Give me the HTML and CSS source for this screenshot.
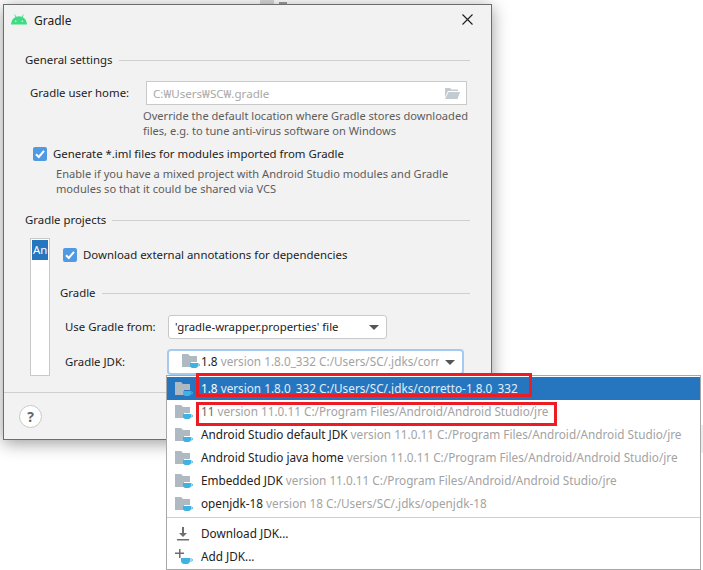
FILE: index.html
```html
<!DOCTYPE html>
<html lang="en">
<head>
<meta charset="utf-8">
<title>Gradle</title>
<link rel="stylesheet" href="styles.css">
</head>
<body>
<svg class="defs" width="0" height="0" aria-hidden="true">
  <symbol id="jdk" viewBox="0 0 18 16">
    <path fill="#afb9c2" d="M0 1h6l2 2h7v6H9v5H0z"/>
    <path fill="#3fb1e3" d="M8 10h8v2.600c0 1.300-1.100 2.400-2.400 2.400h-3.200C9.100 15 8 13.900 8 12.600z"/>
    <path fill="none" stroke="#3fb1e3" d="M15.500 11h1.200a.8.800 0 0 1 0 1.800h-1.200"/>
  </symbol>
  <symbol id="tick" viewBox="0 0 14 14">
    <path fill="none" stroke="#fff" stroke-width="2" d="M3 7.200l2.800 2.800L11 3.800"/>
  </symbol>
</svg>

<div class="bg-mark bg-mark-a"></div>
<div class="bg-mark bg-mark-b"></div>
<div class="bg-mark bg-mark-c"></div>

<main class="dialog">
  <header class="titlebar">
    <svg class="android" viewBox="0 0 16 11" aria-hidden="true">
      <path fill="#3ddc84" d="M0 10.500C.2 6.800 2 4.200 4.500 3L3.200.8l.7-.4L5.300 2.700C6.100 2.400 7 2.200 8 2.200s1.900.2 2.700.5L12.100.4l.7.4L11.500 3C14 4.200 15.800 6.800 16 10.500z"/>
      <circle cx="4.700" cy="7.300" r=".8" fill="#f2f2f2"/>
      <circle cx="11.300" cy="7.300" r=".8" fill="#f2f2f2"/>
    </svg>
    <span class="title">Gradle</span>
    <svg class="close" viewBox="0 0 11 11" aria-hidden="true">
      <path stroke="#1c1c1c" stroke-width="1.100" d="M.5.500l10 10M10.500.500l-10 10"/>
    </svg>
  </header>

  <section class="content">
    <div class="section-head"><span>General settings</span><i></i></div>
    <div class="home-row">
      <label class="field-label">Gradle user home:</label>
      <div class="path-input">
        <span>C:₩Users₩SC₩.gradle</span>
        <svg class="open-folder" viewBox="0 0 15 11" aria-hidden="true">
          <path fill="#c3cbd2" d="M0 0h5l1.500 1.500H13V3H3L0 9.500z"/>
          <path fill="#c3cbd2" d="M3.500 4H15l-2.500 7H0z"/>
        </svg>
      </div>
    </div>
    <p class="help help-home">Override the default location where Gradle stores downloaded<br>files, e.g. to tune anti-virus software on Windows</p>
    <div class="check-row check-iml">
      <span class="checkbox"><svg viewBox="0 0 14 14"><use href="#tick"/></svg></span>
      <span>Generate *.iml files for modules imported from Gradle</span>
    </div>
    <p class="help help-iml">Enable if you have a mixed project with Android Studio modules and Gradle<br>modules so that it could be shared via VCS</p>

    <div class="section-head head-projects"><span>Gradle projects</span><i></i></div>
    <div class="projects">
      <div class="project-list"><div class="project-item">And</div></div>
      <div class="project-detail">
        <div class="check-row check-annot">
          <span class="checkbox"><svg viewBox="0 0 14 14"><use href="#tick"/></svg></span>
          <span>Download external annotations for dependencies</span>
        </div>
        <div class="section-head head-gradle"><span>Gradle</span><i></i></div>
        <div class="form-row row-from">
          <label class="form-label">Use Gradle from:</label>
          <div class="combo combo-from"><span>'gradle-wrapper.properties' file</span><b class="arrow"></b></div>
        </div>
        <div class="form-row row-jdk">
          <label class="form-label">Gradle JDK:</label>
          <div class="combo combo-jdk">
            <svg class="jdk-icon"><use href="#jdk"/></svg>
            <span class="clip">1.8 <em>version 1.8.0_332 C:/Users/SC/.jdks/corr</em></span>
            <b class="arrow"></b>
          </div>
        </div>
      </div>
    </div>
  </section>

  <footer class="footer">
    <span class="help-btn">?</span>
  </footer>
</main>

<ul class="popup">
  <li class="item selected"><svg class="jdk-icon"><use href="#jdk"/></svg><span>1.8 <em>version 1.8.0_332 C:/Users/SC/.jdks/corretto-1.8.0_332</em></span></li>
  <li class="item"><svg class="jdk-icon"><use href="#jdk"/></svg><span class="dim">11 <em>version 11.0.11 C:/Program Files/Android/Android Studio/jre</em></span></li>
  <li class="item"><svg class="jdk-icon"><use href="#jdk"/></svg><span>Android Studio default JDK <em>version 11.0.11 C:/Program Files/Android/Android Studio/jre</em></span></li>
  <li class="item"><svg class="jdk-icon"><use href="#jdk"/></svg><span>Android Studio java home <em>version 11.0.11 C:/Program Files/Android/Android Studio/jre</em></span></li>
  <li class="item"><svg class="jdk-icon"><use href="#jdk"/></svg><span>Embedded JDK <em>version 11.0.11 C:/Program Files/Android/Android Studio/jre</em></span></li>
  <li class="item"><svg class="jdk-icon"><use href="#jdk"/></svg><span>openjdk-18 <em>version 18 C:/Users/SC/.jdks/openjdk-18</em></span></li>
  <li class="sep"></li>
  <li class="item">
    <svg class="jdk-icon" viewBox="0 0 18 16"><path fill="#6e6e6e" d="M7 1h2v6h3L8 11 4 7h3zM2 13h12v1.500H2z"/></svg>
    <span>Download JDK...</span>
  </li>
  <li class="item">
    <svg class="jdk-icon" viewBox="0 0 18 16"><path fill="#6e6e6e" d="M4 0h1.500v3.500H9V5H5.500v4H4V5H0V3.500h4z"/><path fill="#3fb1e3" d="M6 9h9v2.800c0 1.700-1.300 3.200-3 3.200H9c-1.700 0-3-1.500-3-3.200z"/><path fill="none" stroke="#3fb1e3" d="M15 10h1.500a1 1 0 0 1 0 2H15"/></svg>
    <span>Add JDK...</span>
  </li>
</ul>

<div class="mark mark-one"></div>
<div class="mark mark-two"></div>
</body>
</html>
```

FILE: styles.css
```css
* { box-sizing: border-box; }
html, body { margin: 0; padding: 0; }
body {
  position: relative;
  width: 703px;
  height: 570px;
  overflow: hidden;
  background: #fff;
  font-family: "Noto Sans", "Open Sans", sans-serif;
  font-size: 11.400px;
  color: #222;
}
.defs { position: absolute; }
.bg-mark { position: absolute; background: #d8d8d8; }
.bg-mark-a { left: 260px; top: 0; width: 14px; height: 5px; }
.bg-mark-b { left: 279px; top: 2px; width: 8px; height: 3px; background: #9a9fa6; }
.bg-mark-c { left: 699px; top: 425px; width: 4px; height: 28px; background: #ececec; }

.dialog {
  position: absolute;
  left: 3px;
  top: 4px;
  width: 489px;
  height: 436px;
  display: flex;
  flex-direction: column;
  background: #f2f2f2;
  border: 1px solid #6d6d6d;
  box-shadow: 0 3px 16px rgba(0, 0, 0, .4);
}
.titlebar {
  display: flex;
  align-items: center;
  height: 30px;
  padding: 0 18px 0 7px;
  flex: none;
}
.android { width: 16px; height: 11px; margin-top: -2px; }
.title { margin-left: 7px; font-size: 12px; flex: 1; }
.close { width: 11px; height: 11px; margin-top: -1px; }

.content { flex: 1; min-height: 0; padding: 0 21px; }
.section-head { display: flex; align-items: center; height: 18px; gap: 6px; }
.section-head span { margin-top: -2px; }
.section-head i { flex: 1; height: 1px; background: #cfcfcf; }
.content > .section-head:first-child { margin-top: 16px; }
.home-row { display: flex; align-items: center; margin-top: 12px; padding-left: 5px; height: 24px; }
.field-label { width: 116px; margin-top: -2px; }
.path-input {
  width: 321px;
  height: 24px;
  display: flex;
  align-items: center;
  justify-content: space-between;
  padding: 0 6px;
  background: #fff;
  border: 1px solid #c9c9c9;
  color: #a8a8a8;
  font-size: 11.600px;
}
.open-folder { width: 15px; height: 11px; }
.help { margin: 0; font-size: 11.100px; line-height: 15px; color: #5c5c5c; white-space: nowrap; }
.help-home { margin: 3px 0 0 118px; }
.check-row { display: flex; align-items: center; gap: 6px; }
.check-row span:last-child { margin-top: -1px; }
.checkbox {
  width: 14px;
  height: 14px;
  flex: none;
  border-radius: 2px;
  background: #4f9ae2;
}
.checkbox svg { display: block; width: 14px; height: 14px; }
.check-iml { margin: 7px 0 0 8px; height: 18px; }
.help-iml { margin: 3px 0 0 31px; }
.head-projects { margin-top: 15px; }
.projects { display: flex; margin: 9px 0 0 5px; }
.project-list {
  width: 20px;
  height: 138px;
  padding: 1px;
  background: #fff;
  border: 1px solid #c9c9c9;
  overflow: hidden;
}
.project-item { height: 20px; line-height: 20px; padding-left: 1px; background: #2675bf; color: #fff; white-space: nowrap; overflow: hidden; }
.project-detail { width: 420px; padding: 8px 0 0 10px; }
.project-detail .checkbox { margin-left: 3px; }
.check-annot { height: 18px; }
.head-gradle { margin-top: 20px; }
.form-row { display: flex; align-items: center; height: 24px; padding-left: 5px; }
.row-from { margin-top: 13px; }
.row-jdk { margin-top: 11px; }
.form-label { width: 103px; margin-top: -2px; }
.combo {
  height: 24px;
  display: flex;
  align-items: center;
  background: #fff;
  border: 1px solid #c9c9c9;
  border-radius: 3px;
  padding: 0 6px 2px;
  white-space: nowrap;
}
.combo-from { width: 219px; justify-content: space-between; }
.combo-jdk {
  width: 295px;
  border: 1px solid #a6c9ef;
  box-shadow: 0 0 0 1px #a6c9ef;
  padding-left: 13px;
}
.clip { flex: 1; min-width: 0; overflow: hidden; font-size: 11.750px; }
.arrow {
  width: 0;
  height: 0;
  margin: 2px 1px 0 6px;
  flex: none;
  border-left: 5px solid transparent;
  border-right: 5px solid transparent;
  border-top: 5px solid #555;
}
em { font-style: normal; color: #a3a3a3; }
.jdk-icon { width: 18px; height: 16px; flex: none; margin-right: 1px; }

.footer {
  height: 47px;
  flex: none;
  display: flex;
  align-items: center;
  padding: 0 0 0 15px;
  border-top: 1px solid #cfcfcf;
}
.help-btn {
  width: 23px;
  height: 23px;
  border-radius: 50%;
  background: #fff;
  border: 1px solid #c9c9c9;
  text-align: center;
  line-height: 21px;
  font-size: 14px;
  font-weight: 700;
  color: #666;
}

.popup {
  position: absolute;
  left: 166px;
  top: 375px;
  width: 535px;
  height: 195px;
  margin: 0;
  padding: 1px 0 0;
  list-style: none;
  background: #fff;
  border: 1px solid #a8a8a8;
  font-size: 11.750px;
}
.item {
  height: 23px;
  display: flex;
  align-items: center;
  gap: 7px;
  padding-left: 8px;
  white-space: nowrap;
}
.item span { margin-top: -2px; }
.selected { background: #2675bf; color: #fff; }
.selected em { color: #e4eef8; }
.dim { color: #666; }
.sep { height: 1px; margin: 2px 0 4px; background: #cfcfcf; }
.mark { position: absolute; border: 3px solid #ed1c24; }
.mark-one { left: 196px; top: 373px; width: 336px; height: 24px; }
.mark-two { left: 196px; top: 402px; width: 361px; height: 24px; }
```
